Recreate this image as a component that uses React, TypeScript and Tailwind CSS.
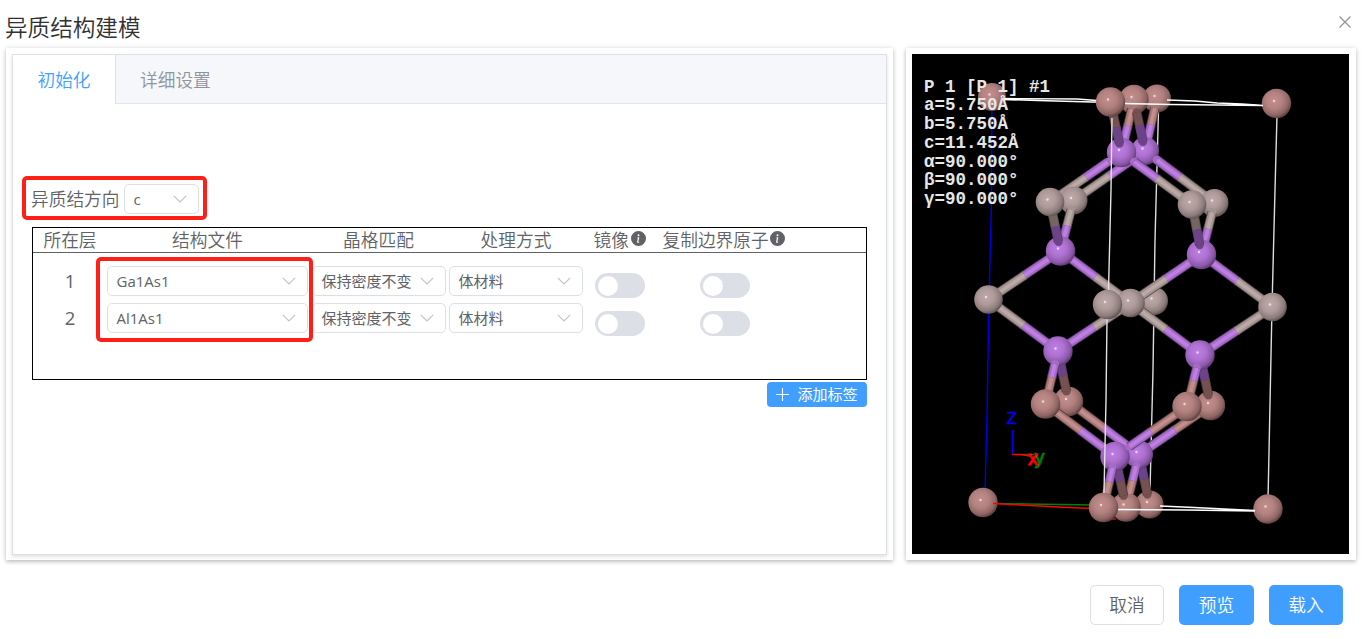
import { BsInfoCircleFill } from "react-icons/bs";

type Kind = "ga" | "al" | "as";
type Point = [number, number];

const BASE: Record<Kind, string> = { ga: "#a87876", al: "#a59391", as: "#a56bc6" };
const DIM: Record<Kind, string> = { ga: "#755251", al: "#746562", as: "#6c4386" };
const LIGHT: Record<Kind, string> = { ga: "#c08e8c", al: "#bba9a7", as: "#bd80e2" };
const EDGE: Record<Kind, string> = { ga: "#553a39", al: "#58504e", as: "#603b77" };

function Atom({ kind, at, r = 14.7 }: { kind: Kind; at: Point; r?: number }) {
  return (
    <g>
      <circle cx={at[0]} cy={at[1]} r={r} fill={`url(#${kind})`} />
      <circle cx={at[0] - 2.5} cy={at[1] - 2.5} r="1.2" fill="#fff" opacity="0.65" />
    </g>
  );
}

function Half({ a, b, kind, dim }: { a: Point; b: Point; kind: Kind; dim?: boolean }) {
  const p = { x1: a[0], y1: a[1], x2: b[0], y2: b[1] };
  return (
    <g>
      <line {...p} stroke={EDGE[kind]} strokeWidth="9.4" />
      <line {...p} stroke={dim ? DIM[kind] : BASE[kind]} strokeWidth="7.6" />
      {!dim && <line {...p} stroke={LIGHT[kind]} strokeWidth="3.6" />}
    </g>
  );
}

// A two-coloured stick; `from` and `to` trim the visible part along the bond.
function Bond({ a, b, ka, kb, from = 0, to = 1, dim }: { a: Point; b: Point; ka: Kind; kb: Kind; from?: number; to?: number; dim?: boolean }) {
  const at = (t: number): Point => [a[0] + (b[0] - a[0]) * t, a[1] + (b[1] - a[1]) * t];
  const cap = (t: number, k: Kind) => <circle cx={at(t)[0]} cy={at(t)[1]} r="4.2" fill={dim ? DIM[k] : BASE[k]} />;
  return (
    <g>
      {from > 0 && cap(from, ka)}
      {to < 1 && cap(to, kb)}
      <Half a={at(from)} b={at(0.52)} kind={ka} dim={dim} />
      <Half a={at(0.5)} b={at(to)} kind={kb} dim={dim} />
    </g>
  );
}

function Structure() {
  const g1: Point = [1110.5, 102], g2: Point = [1134, 99.5], g3: Point = [1157, 98.5];
  const s1: Point = [1121.5, 152.5], s2: Point = [1145, 151];
  const l1: Point = [1050, 202], l2: Point = [1073.5, 200.5], l3: Point = [1192, 204.5], l4: Point = [1214.5, 203];
  const s3: Point = [1060.5, 251], s4: Point = [1201.5, 254.5];
  const m0: Point = [988.5, 299.5], m1: Point = [1107.5, 304.5], m2: Point = [1130.5, 303], m3: Point = [1154, 301], m4: Point = [1272.5, 307];
  const s5: Point = [1058, 351], s6: Point = [1200, 355];
  const h1: Point = [1045.5, 404], h2: Point = [1068.5, 401.5], h3: Point = [1187, 406.5], h4: Point = [1210.5, 405.5];
  const s7: Point = [1115, 456.5], s8: Point = [1139, 454.5];
  const b0: Point = [983, 502.5], b1: Point = [1103.5, 507.5], b2: Point = [1126, 507], b3: Point = [1149.5, 504.5], b4: Point = [1268, 509];
  const info = ["P 1 [P 1] #1", "a=5.750Å", "b=5.750Å", "c=11.452Å", "α=90.000°", "β=90.000°", "γ=90.000°"];
  return (
    <svg className="block h-[500px] w-[437px] bg-black" viewBox="912 54 437 500">
      <defs>
        <radialGradient id="ga" cx="42%" cy="40%" r="62%">
          <stop offset="0" stopColor="#c28e8c" /><stop offset="0.45" stopColor="#b38280" /><stop offset="0.8" stopColor="#8f6665" /><stop offset="1" stopColor="#5c3f3e" />
        </radialGradient>
        <radialGradient id="al" cx="42%" cy="40%" r="62%">
          <stop offset="0" stopColor="#bfaaa8" /><stop offset="0.45" stopColor="#ae9b99" /><stop offset="0.8" stopColor="#8b7b7a" /><stop offset="1" stopColor="#5b504f" />
        </radialGradient>
        <radialGradient id="as" cx="42%" cy="40%" r="62%">
          <stop offset="0" stopColor="#bf7fe5" /><stop offset="0.45" stopColor="#ae71d1" /><stop offset="0.8" stopColor="#8c58aa" /><stop offset="1" stopColor="#5d3972" />
        </radialGradient>
      </defs>

      <path d="M992 83L991.5 200L989 300L987 415L985 495" fill="none" stroke="#0000e8" strokeWidth="1.4" />
      <path d="M1158.5 110L1155 240L1153 370L1150 490" fill="none" stroke="#ddd" strokeWidth="1.4" />
      <path d="M1277 115L1275 190L1272 307L1268 500" fill="none" stroke="#ddd" strokeWidth="1.4" />

      <Atom kind="ga" at={[992, 97]} r={14} />
      <Atom kind="ga" at={[1276.5, 103.5]} />
      <path d="M1003 98.5L1077 99L1110 101.5M1003 99.5L1038 100.5L1110 102.5" fill="none" stroke="#fff" strokeWidth="1.4" />

      {/* upper layer */}
      <Atom kind="ga" at={g3} r={14} />
      <Bond a={g3} b={s2} ka="ga" kb="as" from={0.18} />
      <Bond a={s2} b={l2} ka="as" kb="al" />
      <Bond a={s2} b={l4} ka="as" kb="al" />
      <Atom kind="as" at={s2} r={14} />
      <Bond a={s2} b={l4} ka="as" kb="al" from={0.17} />
      <Atom kind="ga" at={g2} />
      <Bond a={g2} b={s1} ka="ga" kb="as" from={0.18} />
      <Bond a={g2} b={s2} ka="ga" kb="as" from={0.25} to={0.82} dim />
      <Atom kind="as" at={s1} />
      <Bond a={s1} b={l1} ka="as" kb="al" from={0.19} />
      <Bond a={s1} b={l3} ka="as" kb="al" from={0.18} />
      <Bond a={g1} b={s1} ka="ga" kb="as" to={0.82} dim />
      <Atom kind="ga" at={g1} />
      <path d="M1125 103.5L1170 104.5L1263 105.5M1167 100L1195 101L1217 103L1242 104L1263 105.5" fill="none" stroke="#fff" strokeWidth="1.4" />

      {/* upper rings */}
      <Atom kind="al" at={l2} r={14} />
      <Atom kind="al" at={l4} r={14} />
      <Bond a={l2} b={s3} ka="al" kb="as" from={0.18} />
      <Bond a={l4} b={s4} ka="al" kb="as" from={0.18} />
      <Bond a={s3} b={m0} ka="as" kb="al" />
      <Bond a={s3} b={m2} ka="as" kb="al" />
      <Atom kind="al" at={m3} r={14} />
      <Bond a={s4} b={m2} ka="as" kb="al" />
      <Bond a={s4} b={m4} ka="as" kb="al" />
      <Bond a={s5} b={m0} ka="as" kb="al" />
      <Bond a={s5} b={m2} ka="as" kb="al" />
      <Bond a={s6} b={m2} ka="as" kb="al" />
      <Bond a={s6} b={m4} ka="as" kb="al" />
      <Atom kind="as" at={s3} />
      <Atom kind="as" at={s4} />
      <Bond a={l1} b={s3} ka="al" kb="as" to={0.81} dim />
      <Bond a={l3} b={s4} ka="al" kb="as" to={0.81} dim />
      <Atom kind="al" at={l1} r={14.3} />
      <Atom kind="al" at={l3} r={14.3} />
      <Atom kind="al" at={m0} r={14.3} />
      <Atom kind="al" at={m2} r={14.3} />
      <Atom kind="al" at={m4} r={14.3} />

      {/* lower rings */}
      <Bond a={h2} b={s8} ka="ga" kb="as" />
      <Bond a={h4} b={s8} ka="ga" kb="as" />
      <Atom kind="ga" at={h2} />
      <Atom kind="ga" at={h4} />
      <Bond a={s5} b={h2} ka="as" kb="ga" to={0.8} dim />
      <Bond a={s6} b={h4} ka="as" kb="ga" to={0.8} dim />
      <Atom kind="as" at={s5} />
      <Atom kind="as" at={s6} />
      <Bond a={s5} b={h1} ka="as" kb="ga" from={0.25} />
      <Bond a={s6} b={h3} ka="as" kb="ga" from={0.25} />
      <Bond a={h1} b={s7} ka="ga" kb="as" />

      <Atom kind="ga" at={b0} />
      <path d="M997 503.5L1027 504L1094 505" fill="none" stroke="#008000" strokeWidth="1.4" />
      <path d="M993 503.5L1021 505L1068 507.5L1092 508.5M1110 519h6" fill="none" stroke="#f00" strokeWidth="1.4" />
      <Atom kind="ga" at={b3} r={14} />
      <Bond a={s8} b={b3} ka="as" kb="ga" to={0.8} dim />
      <Atom kind="as" at={s8} r={14} />
      <Atom kind="ga" at={b2} />
      <Bond a={s8} b={b2} ka="as" kb="ga" from={0.22} to={0.75} />
      <Bond a={s7} b={b2} ka="as" kb="ga" to={0.78} dim />
      <Atom kind="as" at={s7} />
      <Bond a={h3} b={s7} ka="ga" kb="as" to={0.8} />
      <Atom kind="ga" at={h1} />
      <Atom kind="ga" at={h3} />
      <Bond a={s7} b={b1} ka="as" kb="ga" from={0.22} />
      <path d="M1112 118L1111 190L1108.5 290M1107 319L1106 400L1104 493" fill="none" stroke="#e6e0e6" strokeWidth="1.4" />
      <Atom kind="al" at={m1} />
      <Atom kind="ga" at={b1} />
      <Atom kind="ga" at={b4} />
      <path d="M1118 509.5L1187 510L1255 511M1160 506L1194 507.5L1224 509L1255 510.5" fill="none" stroke="#fff" strokeWidth="1.4" />

      <path d="M1012.5 430V454" stroke="#00f" strokeWidth="1.3" />
      <path d="M1020 454.5h14" stroke="#008000" strokeWidth="1.3" />
      <path d="M1012 454.5h8l10 1.5" fill="none" stroke="#f00" strokeWidth="1.3" />
      <g className="font-['Liberation_Sans',sans-serif] text-[17px]">
        <text x="1006.5" y="424" fill="#00f" stroke="#00f" strokeWidth="0.3">Z</text>
        <text x="1034.5" y="464" fill="#008000" stroke="#008000" strokeWidth="0.7" fontSize="20">y</text>
        <text x="1028" y="464.5" fill="#f00" stroke="#f00" strokeWidth="0.9" fontSize="20">x</text>
      </g>
      <g className="font-['Liberation_Mono',monospace] text-[17.5px] font-bold" fill="#e6e6e6">
        {info.map((line, i) => (
          <text key={line} x="924" y={91.5 + i * 18.75} xmlSpace="preserve">{line}</text>
        ))}
      </g>
    </svg>
  );
}

function Select({ value, className }: { value: string; className: string }) {
  return (
    <div className={`flex h-[30px] shrink-0 items-center justify-between rounded-[5px] border border-[#dcdfe6] bg-white pr-[11px] pl-[9px] text-[15px] leading-none font-normal whitespace-nowrap text-[#606266] ${className}`}>
      <span className="-ml-px pl-[0.5px]">{value}</span>
      <svg className="h-2 w-3.5 shrink-0" viewBox="0 0 14 8" fill="none" stroke="#c0c4cc" strokeWidth="1.2">
        <path d="M0.8 0.8L7 7L13.2 0.8" />
      </svg>
    </div>
  );
}

function Switch() {
  return (
    <div className="flex h-[25px] w-[50px] items-center rounded-full bg-[#dcdfe6] pl-[3px]">
      <div className="h-5 w-5 rounded-full bg-white" />
    </div>
  );
}

function Row({ index, file, offset }: { index: number; file: string; offset: string }) {
  return (
    <div className="flex h-[37px] items-start">
      <div className="w-[74px] text-center text-[18.5px] leading-[29px] font-normal">{index}</div>
      <Select value={file} className="w-[201px]" />
      <Select value="保持密度不变" className="ml-1 w-[134px]" />
      <Select value="体材料" className="ml-[3px] w-[134px]" />
      <div className={`ml-3 flex gap-[55px] ${offset}`}>
        <Switch />
        <Switch />
      </div>
    </div>
  );
}

const PANEL = "bg-white p-1.5 shadow-[0_2px_4px_rgba(0,0,0,0.2),0_0_6px_rgba(0,0,0,0.1)]";

export default function App() {
  return (
    <div className="relative flex h-[639px] w-[1362px] flex-col overflow-hidden bg-white font-['Open_Sans','Noto_Sans_CJK_SC',sans-serif] text-[17.7px] font-[350] text-[#606266]">
      <header className="flex h-12 shrink-0 items-start justify-between pr-[10px] pl-[5px]">
        <h1 className="pt-[13px] text-[22.6px] leading-[30px] text-[#303133]">异质结构建模</h1>
        <svg className="mt-4 mr-px h-3 w-3" viewBox="0 0 12 12" fill="none" stroke="#909399" strokeWidth="1.2">
          <path d="M0.5 0.5L11.5 11.5M11.5 0.5L0.5 11.5" />
        </svg>
      </header>

      <main className="flex h-[512px] shrink-0 gap-[13px] pl-1.5">
        <section className={`w-[887px] ${PANEL}`}>
          <div className="h-[501px] w-[875px] border border-[#dcdfe6] shadow-[0_2px_4px_rgba(0,0,0,0.12)]">
            <nav className="flex h-[49px] border-b border-[#dfe4ed] bg-[#f5f7fa] leading-[50px]">
              <div className="h-[49px] w-[103px] border-r border-[#dcdfe6] bg-white text-center text-[#409eff]">初始化</div>
              <div className="pl-6 text-[#909399]">详细设置</div>
            </nav>

            <div className="w-[854px] pt-[80px] pl-[19px]">
              <div className="flex h-[30px] w-[167px] items-center justify-between">
                <span className="-ml-px leading-[30px]">异质结方向</span>
                <Select value="c" className="w-[75px]" />
              </div>

              <div className="mt-[13px] h-[153px] w-[835px] border border-black">
                <div className="flex h-[25px] border-b border-[#606266] leading-[24px] whitespace-nowrap">
                  <div className="w-[74px] text-center">所在层</div>
                  <div className="w-[201px] text-center">结构文件</div>
                  <div className="w-[141px] text-center">晶格匹配</div>
                  <div className="w-[134px] text-center">处理方式</div>
                  <div className="flex w-[80px] pl-[10.5px]">镜像<BsInfoCircleFill className="mt-[3px] ml-[2px] h-[15px] w-[15px]" /></div>
                  <div className="-ml-[0.5px] flex">复制边界原子<BsInfoCircleFill className="mt-[3px] ml-[1px] h-[15px] w-[15px]" /></div>
                </div>
                <div className="pt-[13px]">
                  <Row index={1} file="Ga1As1" offset="mt-[7px]" />
                  <Row index={2} file="Al1As1" offset="mt-2" />
                </div>
              </div>

              <div className="mt-0.5 flex justify-end">
                <button className="flex h-[25px] w-[100px] items-center justify-center gap-2 rounded-[4px] bg-[#409eff] text-[15px] leading-none font-normal text-white">
                  <svg className="h-[13px] w-[13px]" viewBox="0 0 13 13" stroke="currentColor" strokeWidth="1.1">
                    <path d="M6.5 0V13M0 6.5H13" />
                  </svg>
                  添加标签
                </button>
              </div>
            </div>
          </div>
        </section>
        <section className={`w-[450px] ${PANEL}`}>
          <Structure />
        </section>
      </main>

      <footer className="flex justify-end gap-[15px] pt-[25px] pr-[19px] leading-none">
        <button className="h-10 w-[74px] rounded-[5px] border border-[#dcdfe6] pt-0.5">取消</button>
        <button className="h-10 w-[75px] rounded-[5px] bg-[#409eff] pt-0.5 text-white">预览</button>
        <button className="h-10 w-[74px] rounded-[5px] bg-[#409eff] pt-0.5 text-white">载入</button>
      </footer>

      <div className="absolute top-[176px] left-[22px] h-11 w-[185px] rounded-[5px] border-4 border-[#ff1f14]" />
      <div className="absolute top-[257px] left-[96px] h-[85px] w-[217px] rounded-[5px] border-4 border-[#ff1f14]" />
    </div>
  );
}
